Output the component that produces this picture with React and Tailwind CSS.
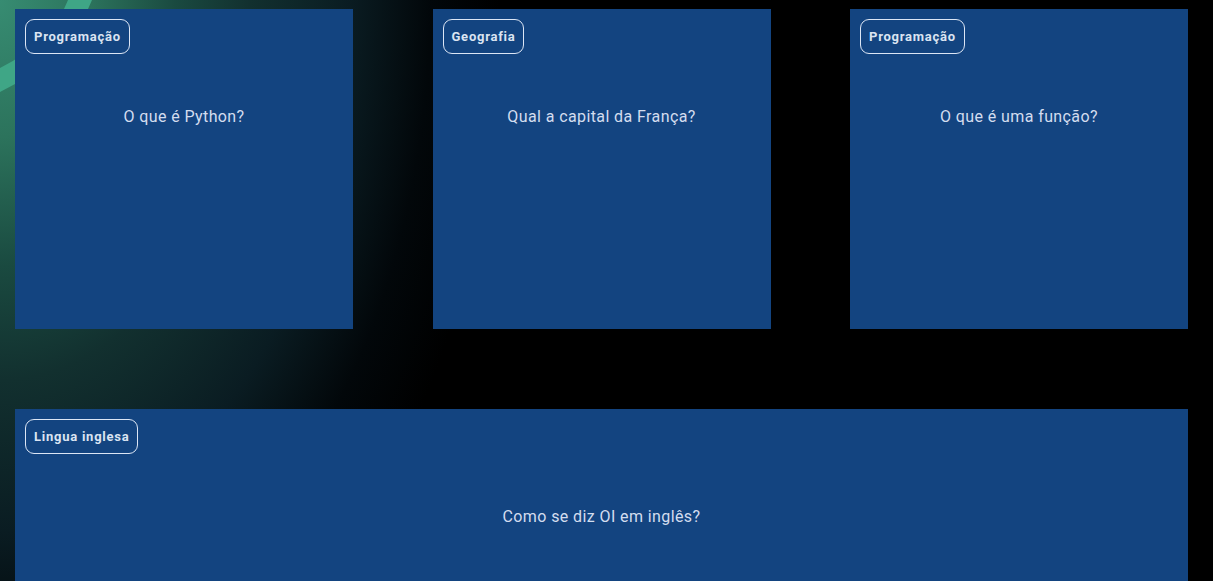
import React from "react";

const cards = [
  { tag: "Programação", q: "O que é Python?" },
  { tag: "Geografia", q: "Qual a capital da França?" },
  { tag: "Programação", q: "O que é uma função?" },
];

function Card({ tag, q, className = "" }) {
  return (
    <div className={"bg-[#134480] h-[320px] p-[10px] flex flex-col " + className}>
      <div className="flex">
        <span className="h-[35px] px-[8px] flex items-center rounded-[9px] border border-[#dce6f5] text-[13px] font-bold text-[#dbe4f2] tracking-[0.75px]">
          {tag}
        </span>
      </div>
      <p className="mt-[51px] text-center text-[16px] leading-[24px] text-[#d3ddef] tracking-[0.4px]">{q}</p>
    </div>
  );
}

export default function App() {
  return (
    <div
      className="relative w-full min-h-[581px] overflow-hidden bg-black font-['Roboto',sans-serif]"
      style={{
        backgroundImage:
          "radial-gradient(ellipse 500px 760px at 0px 0px, #378c72 0%, #2c735c 18%, #1a4a40 35%, #12302f 50%, #0a1c22 70%, #02070a 86%, #000 100%)",
      }}
    >
      <svg className="absolute left-0 top-0" width="120" height="120" viewBox="0 0 120 120">
        <path d="M92 0 Q70 58 0 92 L0 68 Q52 42 68 0 Z" fill="#3fa686" />
      </svg>
      <div className="relative pl-[15px] pr-[25px] pt-[9px] grid grid-cols-3 gap-x-[79.5px] gap-y-[80px]">
        {cards.map((c, i) => (
          <Card key={i} tag={c.tag} q={c.q} />
        ))}
        <Card className="col-span-3" tag="Lingua inglesa" q="Como se diz OI em inglês?" />
      </div>
    </div>
  );
}
